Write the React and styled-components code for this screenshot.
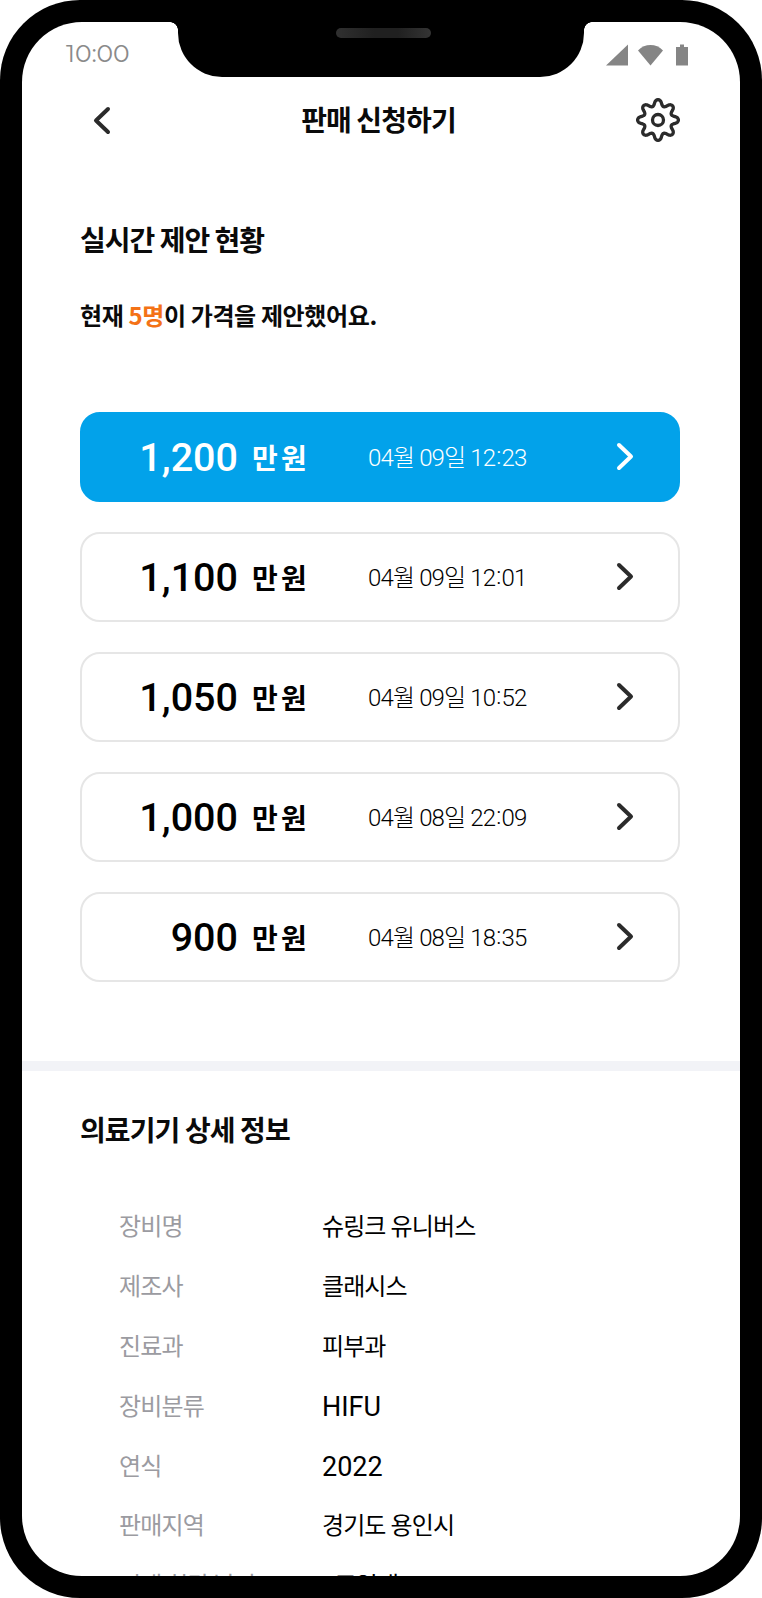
import React from 'react';
import styled, { createGlobalStyle } from 'styled-components';

const Global = createGlobalStyle`
  html, body { margin: 0; padding: 0; background: #fff; }
  body { font-family: "Noto Sans CJK KR", "Noto Sans", sans-serif; }
`;

const Frame = styled.div`
  width: 762px;
  height: 1598px;
  box-sizing: border-box;
  padding: 22px;
  background: #000;
  border-radius: 80px;
  position: relative;
`;

const Screen = styled.div`
  height: 100%;
  background: #fff;
  border-radius: 60px;
  overflow: hidden;
  display: flex;
  flex-direction: column;
`;

const Notch = styled.div`
  position: absolute;
  top: 22px;
  left: 178px;
  width: 406px;
  height: 55px;
  background: #000;
  border-radius: 0 0 44px 44px;
  display: flex;
  justify-content: center;
  padding: 6px 0 0 5px;
  box-sizing: border-box;
  &::before, &::after {
    content: '';
    position: absolute;
    top: 0;
    width: 8px;
    height: 8px;
  }
  &::before { left: -8px; background: radial-gradient(circle at 0 100%, transparent 7.5px, #000 8px); }
  &::after { right: -8px; background: radial-gradient(circle at 100% 100%, transparent 7.5px, #000 8px); }
`;

const Speaker = styled.div`
  width: 95px;
  height: 10px;
  border-radius: 5px;
  background: linear-gradient(90deg, #303030 0%, #202020 40%, #202020 65%, #343434 100%);
`;

const StatusBar = styled.div`
  height: 66px;
  flex: none;
  display: flex;
  align-items: center;
  justify-content: space-between;
  padding: 0 52px 0 44px;
`;

const Clock = styled.span`
  font-family: "Montserrat", "Inter", sans-serif;
  font-size: 25px;
  font-weight: 400;
  color: #8a8a8a;
  letter-spacing: -0.1px;
  margin-top: -5px;
`;

const StatusIcons = styled.div`
  display: flex;
  align-items: center;
`;

const StatusIcon = styled.svg`
  display: block;
  margin-left: ${p => p.$gap || 0}px;
  fill: #858585;
`;

const Header = styled.header`
  height: 64px;
  flex: none;
  display: flex;
  align-items: center;
  justify-content: space-between;
  padding: 0 60px 0 71px;
`;

const HeaderTitle = styled.h1`
  margin: -2px 0 0 8px;
  font-size: 28px;
  font-weight: 700;
  letter-spacing: -0.9px;
  color: #0a0a0a;
`;

const Section = styled.section`
  padding: 0 60px 0 58px;
  flex: none;
  margin-top: ${p => p.$top || 0}px;
`;

const SectionTitle = styled.h2`
  margin: 0;
  font-size: 28px;
  font-weight: 700;
  line-height: 40px;
  letter-spacing: -1px;
  color: #0a0a0a;
`;

const Lead = styled.p`
  margin: 38px 0 0;
  font-size: 24px;
  font-weight: 700;
  line-height: 36px;
  letter-spacing: -0.38px;
  color: #0a0a0a;
`;

const Accent = styled.span`
  color: #f47216;
`;

const OfferList = styled.div`
  margin-top: 79px;
  display: flex;
  flex-direction: column;
  gap: 30px;
`;

const Offer = styled.div`
  height: 90px;
  box-sizing: border-box;
  border-radius: 20px;
  display: grid;
  grid-template-columns: 156px 70px 1fr auto;
  align-items: center;
  padding: 0 42px 0 0;
  background: ${p => (p.$active ? '#02a2ea' : '#fff')};
  border: 2px solid ${p => (p.$active ? '#02a2ea' : '#e6e6e6')};
  color: ${p => (p.$active ? '#fff' : '#000')};
`;

const Amount = styled.span`
  font-family: "Roboto", "Noto Sans CJK KR", sans-serif;
  font-size: 39.5px;
  font-weight: 500;
  text-align: right;
`;

const Unit = styled.span`
  font-size: 28px;
  font-weight: 700;
  margin-left: 14px;
  white-space: nowrap;
  word-spacing: -3px;
`;

const When = styled.span`
  font-family: "Roboto", "Noto Sans CJK KR", sans-serif;
  font-size: 24px;
  font-weight: 300;
  margin: -3px 0 0 60px;
  letter-spacing: -0.85px;
  white-space: nowrap;
`;

const Colon = styled.span`
  position: relative;
  top: -2px;
  margin: 0 1px;
`;

const Chevron = styled.svg`
  display: block;
  fill: none;
  stroke: ${p => p.$color || '#2b2b2b'};
  stroke-width: 4;
  stroke-linecap: round;
  stroke-linejoin: round;
`;

const NavChevron = styled(Chevron)`
  margin-top: 2px;
`;

const Gear = styled.svg`
  display: block;
  fill: none;
  stroke: #2b2b2b;
  stroke-width: 3.300;
  stroke-linejoin: round;
`;

const Divider = styled.div`
  height: 10px;
  flex: none;
  background: #f2f3f7;
  margin-top: 79px;
`;

const DetailSection = styled(Section)`
  padding-top: 38px;
`;

const DetailTitle = styled(SectionTitle)`
  letter-spacing: -0.9px;
`;

const DetailList = styled.dl`
  margin: 46px 0 0;
  padding-left: 39px;
  display: grid;
  grid-template-columns: 203px 1fr;
  grid-auto-rows: 59.8px;
  align-items: center;
`;

const Label = styled.dt`
  font-size: 24px;
  font-weight: 400;
  letter-spacing: -0.8px;
  color: #9b9ba1;
  white-space: nowrap;
`;

const Value = styled.dd`
  margin: ${p => (p.$latin ? '5px 0 0' : 0)};
  font-family: "Roboto", "Noto Sans CJK KR", sans-serif;
  font-size: ${p => (p.$latin ? 27 : 24)}px;
  font-weight: 400;
  letter-spacing: ${p => (p.$latin ? 0 : -0.9)}px;
  color: #000;
  white-space: nowrap;
`;

const gearPath = (() => {
  const pts = [];
  for (let i = 0; i < 128; i += 1) {
    const t = (i / 128) * Math.PI * 2;
    const wave = Math.cos(8 * t);
    const r = 17.4 + 3 * Math.sign(wave) * Math.pow(Math.abs(wave), 0.7);
    pts.push(`${(22 + r * Math.sin(t)).toFixed(2)} ${(22 - r * Math.cos(t)).toFixed(2)}`);
  }
  return `M${pts.join('L')}Z`;
})();

const offers = [
  ['1,200', '04월 09일 12', '23'],
  ['1,100', '04월 09일 12', '01'],
  ['1,050', '04월 09일 10', '52'],
  ['1,000', '04월 08일 22', '09'],
  ['900', '04월 08일 18', '35'],
];

const details = [
  ['장비명', '슈링크 유니버스'],
  ['제조사', '클래시스'],
  ['진료과', '피부과'],
  ['장비분류', 'HIFU', true],
  ['연식', '2022', true],
  ['판매지역', '경기도 용인시'],
  ['거래 희망 날짜', '1주일내'],
];

export default function App() {
  return (
    <>
      <Global />
      <Frame>
        <Screen>
          <StatusBar>
            <Clock>10:00</Clock>
            <StatusIcons>
              <StatusIcon width="22" height="22" viewBox="0 0 22 22"><path d="M0 21.500L22 .5V21.500Z" /></StatusIcon>
              <StatusIcon $gap={10} width="25" height="22" viewBox="0 0 25 22"><path d="M0 6.500C7-.8 18-.8 25 6.500L12.500 21.500Z" /></StatusIcon>
              <StatusIcon $gap={13} width="12" height="22" viewBox="0 0 12 22"><path d="M0 3H4V.5H8V3H12V21.500H0Z" /></StatusIcon>
            </StatusIcons>
          </StatusBar>
          <Header>
            <NavChevron width="20" height="30" viewBox="0 0 20 30"><path d="M15 3L3 14.500L15 26" /></NavChevron>
            <HeaderTitle>판매 신청하기</HeaderTitle>
            <Gear width="44" height="44" viewBox="0 0 44 44">
              <path d={gearPath} />
              <circle cx="22" cy="22" r="5.500" />
            </Gear>
          </Header>
          <Section $top={67}>
            <SectionTitle>실시간 제안 현황</SectionTitle>
            <Lead>현재 <Accent>5명</Accent>이 가격을 제안했어요.</Lead>
            <OfferList>
              {offers.map(([amount, day, minute], i) => (
                <Offer key={amount} $active={i === 0}>
                  <Amount>{amount}</Amount>
                  <Unit>만 원</Unit>
                  <When>{day}<Colon>:</Colon>{minute}</When>
                  <Chevron $color={i === 0 ? '#fff' : '#2b2b2b'} width="20" height="30" viewBox="0 0 20 30"><path d="M3 3L15 14.500L3 26" /></Chevron>
                </Offer>
              ))}
            </OfferList>
          </Section>
          <Divider />
          <DetailSection>
            <DetailTitle>의료기기 상세 정보</DetailTitle>
            <DetailList>
              {details.map(([k, v, latin]) => (
                <React.Fragment key={k}>
                  <Label>{k}</Label>
                  <Value $latin={latin}>{v}</Value>
                </React.Fragment>
              ))}
            </DetailList>
          </DetailSection>
        </Screen>
        <Notch><Speaker /></Notch>
      </Frame>
    </>
  );
}
